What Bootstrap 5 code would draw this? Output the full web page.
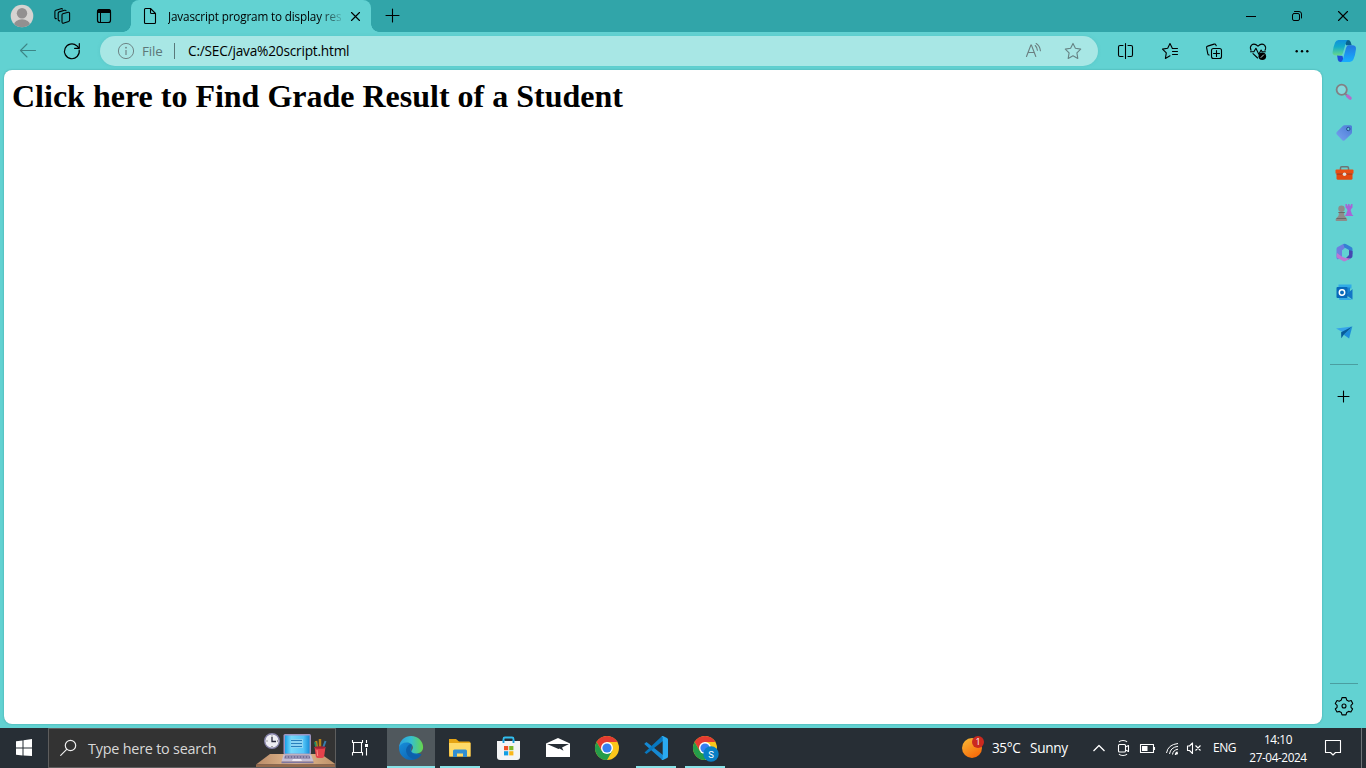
<!DOCTYPE html>
<html lang="en">
<head>
<meta charset="utf-8">
<meta name="viewport" content="width=device-width, initial-scale=1">
<title>Javascript program to display result</title>
<link href="https://cdn.jsdelivr.net/npm/bootstrap@5.3.0/dist/css/bootstrap.min.css" rel="stylesheet">
<style>
body{font-family:"Open Sans","Noto Sans",sans-serif;background:#62d2d2;color:#000;line-height:1}
svg{display:block;flex:none}
.tabstrip{height:32px;background:#31a5a9}
.tab-current{width:240px;height:32px;background:#62d2d2;border-radius:8px 8px 0 0;position:relative}
.tab-current::before,.tab-current::after{content:"";position:absolute;bottom:0;width:8px;height:8px}
.tab-current::before{left:-8px;background:radial-gradient(circle at 0 0,transparent 7.5px,#62d2d2 8px)}
.tab-current::after{right:-8px;background:radial-gradient(circle at 100% 0,transparent 7.5px,#62d2d2 8px)}
.tab-label{width:174px;font-size:11.7px;letter-spacing:-.14px;line-height:32px;-webkit-mask-image:linear-gradient(90deg,#000 150px,transparent 178px)}
.toolbar{height:38px}
.address{width:998px;height:30px;background:#a8e7e5;font-size:13px;line-height:30px;margin-right:6px;box-shadow:0 0 3px #4fbabb80}
.scheme{width:32px;font-size:13.4px;color:#5c7778;letter-spacing:-.1px}
.url{width:300px;font-size:13.7px;letter-spacing:-.22px}
.page{width:1318px;height:654px;border-radius:8px;margin-left:4px;padding:8px;box-shadow:0 0 2px #287f8099}
.page h1{font:bold 32px/37px "Liberation Serif",serif}
.side{width:44px;height:658px;padding-top:2px}
.side hr{width:28px;height:1px;background:#4a9ea0;border:0;opacity:1;margin:0}
.taskbar{height:40px;background:#272e35;color:#fff}
.search{width:288px;height:40px;background:#333;border:1px solid #5d5d5d;color:#d8d8d8;font-size:14.4px;letter-spacing:-.22px;line-height:38px}
.search-label{width:167px;padding-top:1px}
.app{height:40px;width:49px}
.app.active{width:48px;background:#50585d}
.app.open{background:linear-gradient(#88e2e7,#88e2e7) center bottom/40px 2px no-repeat}
.app.active.open{background:linear-gradient(#88e2e7,#88e2e7) center bottom/48px 2px no-repeat #50585d}
.temp{width:38px;font-size:13.6px;letter-spacing:-.4px}
.sky{width:56px;font-size:13.6px;letter-spacing:-.3px}
.lang{width:30px;font-size:12px;letter-spacing:-.5px}
.clock{width:70px;font-size:11.8px;line-height:18px;letter-spacing:-.42px;padding-bottom:1px}
.edge-line{width:1px;height:40px;background:#6f7478}
.ln{fill:none;stroke:#000;stroke-width:1.1;stroke-linecap:round;stroke-linejoin:round}
.wh{stroke:#fff;stroke-linecap:butt}
</style>
</head>
<body class="vh-100 overflow-hidden">
<header>
 <div class="tabstrip d-flex">
  <svg width="44" height="32" viewBox="0 0 44 32"><defs><clipPath id="av"><circle cx="22" cy="16" r="11.3"/></clipPath></defs><circle cx="22" cy="16" r="11.3" fill="#d5d3d1"/><g clip-path="url(#av)" fill="#929090"><circle cx="22" cy="13.2" r="5.2"/><ellipse cx="22" cy="25" rx="8" ry="5.8"/></g></svg>
  <svg width="40" height="32" viewBox="44 0 40 32" class="ln"><path d="M62.800 13.800l5.300-1.500q1.200-.3 1.500.8v6.900q0 1-1 1.400l-4.600 1.700q-1.700.6-2-.9v-7.200q0-.9.800-1.200zM59.700 20.900q-1.300.2-1.500-1v-6.700q0-1 1-1.300l5.400-1.600q1-.3 1.500.4M56.300 18.600q-1.200.2-1.400-1v-6q0-1 1-1.300l5-1.600q1.200-.3 1.600.4"/></svg>
  <svg width="47" height="32" viewBox="84 0 47 32"><rect x="97.500" y="9.500" width="13" height="13" rx="2.300" class="ln" style="stroke-width:1.200"/><path d="M97 13V11.500q0-2.500 2.500-2.500h9q2.500 0 2.500 2.500V13z"/><path d="M100.500 13v9.500" stroke="#000"/></svg>
  <div class="tab-current d-flex">
   <svg width="37" height="32" viewBox="131 0 37 32" class="ln"><path d="M145.500 8.500h5l5 5v9q0 1-1 1h-9q-1 0-1-1v-13q0-1 1-1zm5 0v4q0 1 1 1h4"/></svg>
   <span class="tab-label text-nowrap overflow-hidden">Javascript program to display res</span>
   <svg width="29" height="32" viewBox="342 0 29 32" class="ln"><path d="M351.500 12.500l8 8m0-8l-8 8"/></svg>
  </div>
  <svg width="44" height="32" viewBox="371 0 44 32" class="ln"><path d="M386 15.500h13M392.500 9v13"/></svg>
  <svg class="ms-auto" width="46" height="32" viewBox="1228 0 46 32"><path d="M1246 16.500h10" stroke="#000"/></svg>
  <svg width="46" height="32" viewBox="1274 0 46 32" class="ln" style="stroke-width:1"><rect x="1292.500" y="13.500" width="7" height="7" rx="1.500"/><path d="M1294.500 11.500h4.500q2.500 0 2.500 2.500v4"/></svg>
  <svg width="46" height="32" viewBox="1320 0 46 32" class="ln"><path d="M1338.500 11.500l9 9m0-9l-9 9"/></svg>
 </div>
 <div class="toolbar d-flex align-items-center">
  <svg width="50" height="38" viewBox="0 32 50 38" class="ln" style="stroke:#3c8586"><path d="M35.500 50.500h-15M27 44l-6.500 6.500L27 57"/></svg>
  <svg width="50" height="38" viewBox="50 32 50 38" class="ln" style="stroke-width:1.200"><path d="M79.200 50.200a7.400 7.400 0 1 1-2.500-4.500l2.300 2.400M79.300 43.700v4.600h-4.700"/></svg>
  <div class="address rounded-pill d-flex">
   <svg width="42" height="30" viewBox="100 36 42 30"><circle cx="126" cy="51" r="7.600" fill="none" stroke="#6e8586"/><path d="M126 50v5" stroke="#6e8586" stroke-width="1.200"/><circle cx="126" cy="47.700" r=".9" fill="#6e8586"/></svg>
   <span class="scheme">File</span>
   <svg width="14" height="30" viewBox="174 36 14 30"><path d="M174.500 43v16" stroke="#59797a"/></svg>
   <span class="url text-nowrap">C:/SEC/java%20script.html</span>
   <svg class="ms-auto" width="40" height="30" viewBox="1014 36 40 30" fill="none" stroke="#6b7f80" stroke-width="1.100" stroke-linecap="round"><path d="M1026.500 56.500l4.400-11.500h.5l4.400 11.500M1028 52.500h6.300M1035.200 45.500q2 1.800 2.200 4.800M1036.200 43.500q3.700 2.300 4.200 7.300"/></svg>
   <svg width="44" height="30" viewBox="1054 36 44 30" fill="none" stroke="#668384" stroke-width="1.100" stroke-linejoin="round"><path d="M1073 43.400l2.400 4.900 5.300.8-3.800 3.800.9 5.500-4.800-2.600-4.800 2.600.9-5.500-3.800-3.800 5.300-.8z"/></svg>
  </div>
  <svg width="44" height="38" viewBox="1104 32 44 38" class="ln"><path d="M1123 45.500h-3q-1.500 0-1.500 1.500v8q0 1.500 1.500 1.500h3M1128 45.500h3q1.500 0 1.500 1.500v8q0 1.500-1.500 1.500h-3M1125.500 43.500v15"/></svg>
  <svg width="44" height="38" viewBox="1148 32 44 38" class="ln"><path d="M1174.800 48.500h-2.400l-2.400-5-2.300 4.800-5.200.8 3.800 3.800-.9 5.500 4.600-2.600M1172.500 48.500h5M1172.500 51.500h5M1172.500 54.500h5"/></svg>
  <svg width="44" height="38" viewBox="1192 32 44 38" class="ln"><rect x="1211.500" y="48.500" width="10" height="10" rx="2"/><path d="M1216.500 50.500v6M1213.500 53.500h6M1209.200 55q-1.200 0-1.400-1.200l-1.200-6.200q-.2-1.200 1-1.500l6.500-2q1.400-.4 1.800.8l.3.800"/></svg>
  <svg width="44" height="38" viewBox="1236 32 44 38" class="ln"><path d="M1251 50.300q-1.500-3.300.5-5.200 2.800-2.400 6.500 1 3.500-3.400 6.500-1 2 2 .5 5.200M1250.500 51.700h3.400l2-3.400 2.900 6 2.300-4.200 1 1.600h3.200M1253 53.600l4.600 4.400"/><circle cx="1262.300" cy="56.300" r="3.800" fill="#000" stroke="none"/><path d="M1261 57.500l2.600-2.600" stroke="#bfecec" stroke-width=".9"/></svg>
  <svg width="44" height="38" viewBox="1280 32 44 38"><circle cx="1296.700" cy="51.200" r="1.200"/><circle cx="1302" cy="51.200" r="1.200"/><circle cx="1307.300" cy="51.200" r="1.200"/></svg>
  <svg width="42" height="38" viewBox="1324 32 42 38"><defs><linearGradient id="c1" x1="0" y1="0" x2="0" y2="1"><stop stop-color="#1090dc"/><stop offset=".45" stop-color="#13acc9"/><stop offset="1" stop-color="#67d88b"/></linearGradient><linearGradient id="c2" x1="0" y1="0" x2="0" y2="1"><stop stop-color="#2377df"/><stop offset="1" stop-color="#16aeff"/></linearGradient></defs><path d="M1343 40h5q2 0 2.700 2l1 3.300h-5.500z" fill="#08638f"/><path d="M1337 55l5.500 1 1.500 6h-3.500q-2 0-2.600-2z" fill="#1d50d8"/><path d="M1338.600 40h9.300q-1.400.5-2 2.700l-3.100 10.500q-.7 2.200-3 2.200h-3.500q-4.200 0-3.700-3.400 1-6 2.500-9.500 1-2.500 3.500-2.500z" fill="url(#c1)"/><path d="M1348.400 45.300h4q3.800 0 3.600 3.600-.6 5.800-2.500 10.400-1 2.700-3.700 2.700h-9q1.500-.6 2.200-3l3-11q.7-2.700 2.400-2.700z" fill="url(#c2)"/></svg>
 </div>
</header>
<div class="d-flex">
 <main class="page bg-white"><h1 class="m-0">Click here to Find Grade Result of a Student</h1></main>
 <aside class="side d-flex flex-column align-items-center">
  <svg width="44" height="40" viewBox="1322 72 44 40"><path d="M1345.500 94l2 2" stroke="#827f83" stroke-width="1.800"/><path d="M1347.600 96l2.600 2.300" stroke="#b56bc9" stroke-width="3.200" stroke-linecap="round"/><circle cx="1341.700" cy="89.700" r="5.100" fill="#83d9dc" stroke="#827f83" stroke-width="1.800"/></svg>
  <svg width="44" height="40" viewBox="1322 112 44 40"><defs><linearGradient id="tg" x1="0" y1="1" x2="1" y2="0"><stop stop-color="#79a4ef"/><stop offset="1" stop-color="#4979d5"/></linearGradient></defs><path d="M1336.800 131.900l6-6q.7-.7 1.700-.7h6q1.500 0 1.500 1.500v5.500q0 1-.7 1.700l-6.600 6.300q-1.200 1-2.400 0l-5.500-5.800q-1.200-1.200 0-2.500z" fill="url(#tg)"/><circle cx="1348.300" cy="129" r="1.700" fill="#64c8db" stroke="#244b91"/></svg>
  <svg width="44" height="40" viewBox="1322 152 44 40"><path d="M1340.500 170v-2q0-1.300 1.300-1.300h5.400q1.300 0 1.300 1.300v2" fill="none" stroke="#6d7475" stroke-width="1.500"/><path d="M1336.500 169.500h16q1 0 1 1v3h-18v-3q0-1 1-1z" fill="#e94e12"/><path d="M1336.500 173.500h16v4.800q0 1.500-1.500 1.500h-13q-1.500 0-1.500-1.500z" fill="#e24a10"/><path d="M1336.500 173.500h16v1h-16z" fill="#a72f11"/><circle cx="1344.500" cy="174.300" r="1.800" fill="#e2e1dd"/></svg>
  <svg width="44" height="40" viewBox="1322 192 44 40"><path d="M1345.500 204v3.500q2 1.500 2 3l-1.500 4q-1 .5-1 1.500h8.300q0-1-1.300-1.500l-1.300-4q0-1.500 1.800-3V204h-1.600v1.500h-1.400V204h-1.500v1.500h-1V204z" fill="#a765d6"/><g fill="#8f8c8a"><circle cx="1341.500" cy="208.800" r="3.200"/><path d="M1338 212h7l-1 1.500q0 3 2.400 4.500.8.500.8 2 0 1-1 1h-9.600q-1 0-1-1 0-1.500 1-2 2.300-1.500 2.400-4.500z"/></g><path d="M1338.500 212.500h6.200M1336.500 218.500h9.500" stroke="#6b696a"/></svg>
  <svg width="44" height="40" viewBox="1322 232 44 40"><path d="M1336.500 249q0-1.300 1.200-2l5.500-3 3.300 2.500-4.500 4v6.500l-4.300 2.500q-1.200-.7-1.200-2z" fill="#6d7fe0"/><path d="M1343.200 244q1.300-.6 2.600 0l5.400 3q1.300.7 1.300 2v5.500l-3.500-4.500-4.500-2.500z" fill="#3480d4"/><path d="M1352.500 251v5q0 1.300-1.200 2l-2.800 1.500-2.500-1.500 3-3v-5z" fill="#4548b0"/><path d="M1337 253l4.800 3.500 3.500 1.500 5.200.5-5 2.600q-1.200.6-2.400 0l-5.500-3q-1.100-.7-1.100-2z" fill="#bd77d2"/><path d="M1342 250.800l3-1.600 3 1.800v3.600l-3 1.700-3-1.700z" fill="#62d2d2"/></svg>
  <svg width="44" height="40" viewBox="1322 272 44 40"><path d="M1338.500 284.500h13v4h-13z" fill="#30abe7"/><path d="M1340.500 287.500h9.500v6h-9.500z" fill="#1687d2"/><path d="M1346 295l6.500-6v10.500z" fill="#1374c6"/><path d="M1339 297l3-2 10.500 5H1340q-1 0-1-1z" fill="#34aae5"/><rect x="1336.500" y="287" width="11" height="11" rx="1" fill="#0869ba"/><circle cx="1342" cy="292.500" r="2.700" fill="none" stroke="#fff" stroke-width="1.500"/></svg>
  <svg width="44" height="40" viewBox="1322 312 44 40"><path d="M1336 328.500l16.300-2-7 7z" fill="#36a4e9"/><path d="M1352.300 326.500l-3.200 12-5.300-3.800z" fill="#1d8cda"/><path d="M1352.300 326.500l-11.200 5.800.2 6 2.700-3.900z" fill="#075c9b"/></svg>
  <hr style="margin-top:12px">
  <svg width="44" height="62" viewBox="1322 365 44 62" class="ln"><path d="M1338 396.500h11M1343.500 391v11"/></svg>
  <hr class="mt-auto">
  <svg width="44" height="44" viewBox="1322 684.8 44 44" class="ln"><path d="M1342 698.400h4l.7 2.500 2 1.100 2.500-.7 1.500 3.100-1.700 1.700v2l1.600 1.700-1.700 3-2.400-.6-1.800 1-.7 2.500h-4l-.7-2.500-1.900-1-2.400.6-1.700-3 1.800-1.700v-2l-1.800-1.700 1.700-3.100 2.300.7 2-1.100z"/><circle cx="1344" cy="706.800" r="2"/></svg>
 </aside>
</div>
<footer class="taskbar d-flex align-items-center">
 <svg width="48" height="40" viewBox="0 728 48 40" fill="#fff"><path d="M16 741.300l6.500-.9v7.100H16zM23.500 740.200l8.500-1.200v8.500h-8.500zM16 748.500h6.500v7.100l-6.500-.9zM23.500 748.500H32v7.500l-8.500-.6z"/></svg>
 <div class="search d-flex align-items-center">
  <svg width="39" height="38" viewBox="49 729 39 38" class="ln" style="stroke:#eee;stroke-width:1.200"><circle cx="70.500" cy="745.500" r="5.200"/><path d="M66.700 749.300l-6 6"/></svg>
  <span class="search-label text-nowrap">Type here to search</span>
  <svg width="80" height="38" viewBox="255 729 80 38">
   <defs><linearGradient id="sc"><stop stop-color="#18a1e9"/><stop offset=".25" stop-color="#77d8fa"/><stop offset=".75" stop-color="#55c5f7"/><stop offset="1" stop-color="#168fd8"/></linearGradient><linearGradient id="dk"><stop stop-color="#b98a67"/><stop offset=".5" stop-color="#e6bd91"/><stop offset="1" stop-color="#bc9068"/></linearGradient></defs>
   <path d="M270 754h51l15 10.500H256z" fill="url(#dk)"/><path d="M256 764.500h80v3.500h-80z" fill="#94694c"/>
   <circle cx="272" cy="741" r="7.300" fill="#eeeef3" stroke="#8784aa" stroke-width="1.400"/><path d="M272 737v4.500h4" fill="none" stroke="#28283b" stroke-width="1.300"/><path d="M272 735.500v1M272 746v1M266.500 741h1M277 741h1" stroke="#555"/>
   <rect x="283.500" y="734" width="27.500" height="20.500" rx="1.500" fill="#9c94c0"/><rect x="285" y="735.500" width="24.500" height="18" fill="url(#sc)"/><rect x="291" y="739" width="12" height="9" fill="#8bd3f2"/><path d="M291 740.500h11M291 743.500h11M291 746.500h11" stroke="#287fbc" stroke-width="1"/>
   <path d="M283.500 754.500h27.500l2.500 7h-32z" fill="#c5bed6"/><path d="M285 755.500h24.500l.8 3h-26z" fill="#766e95"/><path d="M286 757h23" stroke="#b7b0ce" stroke-dasharray="2 1"/><path d="M293 759h8l1 2h-10z" fill="#eeeaf4"/><path d="M281.500 761.500h32v1.800h-32z" fill="#7f769f"/>
   <path d="M317 748l-1-7M320 748v-9" stroke="#b88117" stroke-width="2.500"/><path d="M323 748l2.500-7" stroke="#397eae" stroke-width="2"/><path d="M316 747l-1-5" stroke="#278e64" stroke-width="1.800"/><path d="M314.500 747h11l-1.300 9q-.3 2-2 2h-4.500q-1.600 0-1.900-2z" fill="#e4424b"/><ellipse cx="320" cy="747.500" rx="5.500" ry="1.300" fill="#a52236"/><path d="M317 750l.7 6" stroke="#fb8b84"/>
  </svg>
 </div>
 <svg width="51" height="40" viewBox="336 728 51 40" class="ln wh"><path d="M352.500 740v2.500h10V740M352.500 755.500v-3h10v3M353.500 742.500v10M361.500 742.500v10M366.500 740v3M366.500 748v7.500"/><path d="M365 744h3v3h-3z" fill="#fff" stroke="none"/></svg>
 <div class="app active open"><svg width="48" height="40" viewBox="387 728 48 40"><defs><linearGradient id="e1"><stop stop-color="#2b9fe0"/><stop offset=".5" stop-color="#35bfd0"/><stop offset="1" stop-color="#67d64a"/></linearGradient><linearGradient id="e2" x1="0" y1="0" x2="1" y2="1"><stop stop-color="#178fdb"/><stop offset="1" stop-color="#0b5baa"/></linearGradient></defs><path d="M399 748q0-5 5-6.500l8 1.500-1 8 10 3.500q-3.500 5.500-10 5.500a12 12 0 0 1-12-12z" fill="url(#e2)"/><path d="M399.100 747c.5-6.500 5.700-11 12-11 7.200 0 12 5.400 12 11.300 0 4.200-3.200 6.200-6.500 6.200-3.500 0-5.200-1.300-5.200-2.300 0-.8 1.500-1.700 1.500-3.700 0-3-3-5-6.500-5-3.300 0-6 2-7.300 4.500z" fill="url(#e1)"/><path d="M410.500 743.800c-3.500 2-5 5-4.300 8 1 4.500 5 7.500 9.500 7.200 2.500-.8 4.500-2.500 5.700-4.500q.3-.7-.5-.4c-4 1.800-8.500.6-10-2.500-1-2.200-.5-4 .8-5.200.5-.8 0-2-1.200-2.600z" fill="#0d60ab"/></svg></div>
 <div class="app open"><svg width="49" height="40" viewBox="435 728 49 40"><path d="M449 739h7l3 2.500h10q1.500 0 1.500 1.500v13.500H449z" fill="#e6a414"/><path d="M449 743h21.500v13.500h-21z" fill="#ffda68"/><path d="M453 757v-6q0-1.500 1.500-1.500h11q1.500 0 1.500 1.500v6h-4v-3.500h-6v3.500z" fill="#328fd3"/></svg></div>
 <div class="app"><svg width="49" height="40" viewBox="484 728 49 40"><path d="M503.500 742v-3q0-1.500 1.500-1.500h7q1.500 0 1.500 1.500v3" fill="none" stroke="#32bff0" stroke-width="1.800"/><path d="M497 741h23v16q0 3-3 3h-17q-3 0-3-3z" fill="#f3f4f5"/><path d="M503.500 740v3M513.500 740v3" stroke="#149ddb" stroke-width="1.800"/><path d="M504 746h4.200v4.200H504z" fill="#ef5024"/><path d="M509.200 746h4.200v4.200h-4.200z" fill="#7eb928"/><path d="M504 751.200h4.200v4.200H504z" fill="#119fe4"/><path d="M509.200 751.200h4.200v4.200h-4.200z" fill="#f9b719"/></svg></div>
 <div class="app"><svg width="49" height="40" viewBox="533 728 49 40"><path d="M546 743.500l12-5.500 12 5.500V757h-24z" fill="#fff"/><path d="M547 744h22l-7 3.500 1.500 3.200-4-2.200-1 .5z" fill="#272e35"/></svg></div>
 <div class="app"><svg width="49" height="40" viewBox="582 728 49 40"><defs><g id="chrome"><circle r="12" fill="#fbc61a"/><path d="M-10.400-6A12 12 0 0 1 10.400-6H0L-5.200 3z" fill="#e43b31"/><path d="M-10.400-6A12 12 0 0 0 0 12L5.200 3-5.200 3z" fill="#259c4a"/><circle r="6" fill="#fff"/><circle r="4.600" fill="#367ff0"/></g></defs><use href="#chrome" x="607" y="748"/></svg></div>
 <div class="app open"><svg width="49" height="40" viewBox="631 728 49 40"><path d="M644.500 743.500l2-1.500 16.500 13v4.800q-.8.200-1.500-.5l-17-15z" fill="#1689d2"/><path d="M644.500 752.500l17-16q.7-.6 1.500-.4v5L646.500 754z" fill="#0878bf"/><path d="M661.500 736.200q.7-.5 1.500-.1l4 2q1 .5 1 1.500v16.800q0 1-1 1.500l-4 2q-.8.300-1.500-.2l1.200-1v-21.500z" fill="#2aaaf1"/></svg></div>
 <div class="app open"><svg width="49" height="40" viewBox="680 728 49 40"><use href="#chrome" x="705" y="748"/><circle cx="711" cy="754" r="7.700" fill="#087fc5"/><text x="711" y="757.500" fill="#fff" text-anchor="middle" font-family="Roboto,sans-serif" font-size="9.500">S</text></svg></div>
 <svg class="ms-auto" width="42" height="40" viewBox="950 728 42 40"><defs><linearGradient id="sun" x1="0" y1="0" x2=".6" y2="1"><stop stop-color="#f8bd38"/><stop offset="1" stop-color="#f66b0a"/></linearGradient></defs><circle cx="972" cy="748" r="10" fill="url(#sun)"/><circle cx="978" cy="742" r="6" fill="#ca291f"/><text x="978" y="745.400" fill="#fff" text-anchor="middle" font-size="9">1</text></svg>
 <span class="temp text-nowrap">35°C</span><span class="sky text-nowrap">Sunny</span>
 <svg width="24" height="40" viewBox="1086 728 24 40" class="ln wh" style="stroke-width:1.300"><path d="M1093.500 751l5.500-5.500 5.500 5.500"/></svg>
 <svg width="26" height="40" viewBox="1110 728 26 40" class="ln wh"><rect x="1118.500" y="744.500" width="7" height="7.500" rx="1"/><path d="M1125.500 747l3-1.500v6l-3-1.500M1119 742q1-1.500 4-1.500t4 1.500M1119 754q1 1.500 4 1.500t4-1.500"/></svg>
 <svg width="24" height="40" viewBox="1136 728 24 40" class="ln wh"><path d="M1140.500 744.500h13v8h-13zM1154.500 747v3"/><path d="M1142 746h5.500v5h-5.500z" fill="#fff" stroke="none"/></svg>
 <svg width="22" height="40" viewBox="1160 728 22 40" class="ln wh" style="stroke-width:1"><path d="M1166.500 753q1.500-8.500 11.500-9.500M1169.500 754q1-6.700 8.500-7.700M1172.500 754.500q.5-4.500 5.500-5.300"/><path d="M1175.500 755q0-2 2-3" stroke-width="1.500"/><circle cx="1177" cy="753.500" r="1" fill="#fff" stroke="none"/></svg>
 <svg width="31" height="40" viewBox="1182 728 31 40" class="ln wh"><path d="M1187.500 746h2l3-3v10.500l-3-3h-2zM1195.500 745.500l5 5m0-5l-5 5"/></svg>
 <span class="lang">ENG</span>
 <div class="clock text-center text-nowrap">14:10<br>27-04-2024</div>
 <svg width="48" height="40" viewBox="1313 728 48 40" class="ln wh"><path d="M1325.500 740.500h15v12h-5l-2.500 2.500-2.500-2.500h-5z"/></svg>
 <div class="edge-line"></div><div class="pe-1"></div>
</footer>
<script src="https://cdn.jsdelivr.net/npm/bootstrap@5.3.0/dist/js/bootstrap.bundle.min.js"></script>
</body>
</html>
